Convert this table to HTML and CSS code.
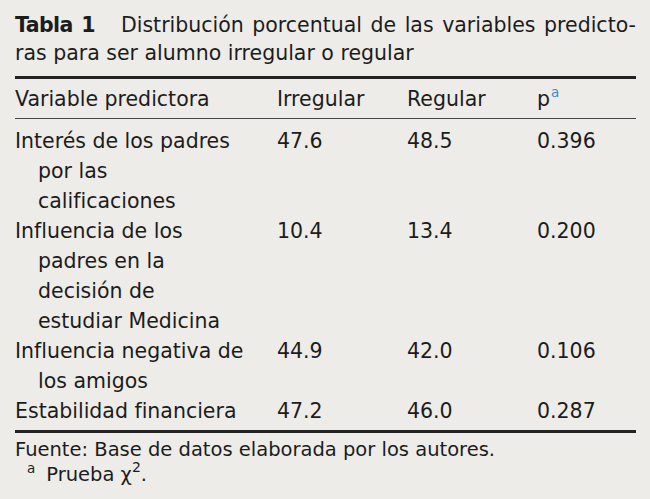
FILE: index.html
```html
<!DOCTYPE html>
<html lang="es">
<head>
<meta charset="utf-8">
<link rel="stylesheet" href="styles.css">
</head>
<body>
<div class="wrap">
  <div class="caption">
    <div class="cap-line1"><span class="cap-label">Tabla 1</span>Distribución porcentual de las variables predicto-</div>
    <div class="cap-line2">ras para ser alumno irregular o regular</div>
  </div>
  <table class="data">
    <thead>
      <tr>
        <th class="c1">Variable predictora</th>
        <th class="c2">Irregular</th>
        <th class="c3">Regular</th>
        <th class="c4">p<sup class="note">a</sup></th>
      </tr>
    </thead>
    <tbody>
      <tr>
        <td class="c1"><div class="hang">Interés de los padres<br>por las<br>calificaciones</div></td>
        <td>47.6</td><td>48.5</td><td>0.396</td>
      </tr>
      <tr>
        <td class="c1"><div class="hang">Influencia de los<br>padres en la<br>decisión de<br>estudiar Medicina</div></td>
        <td>10.4</td><td>13.4</td><td>0.200</td>
      </tr>
      <tr>
        <td class="c1"><div class="hang">Influencia negativa de<br>los amigos</div></td>
        <td>44.9</td><td>42.0</td><td>0.106</td>
      </tr>
      <tr class="last">
        <td class="c1"><div class="hang">Estabilidad financiera</div></td>
        <td>47.2</td><td>46.0</td><td>0.287</td>
      </tr>
    </tbody>
  </table>
  <div class="foot">
    <div>Fuente: Base de datos elaborada por los autores.</div>
    <div class="fn"><sup class="fn-mark">a</sup>Prueba χ<sup class="sq">2</sup>.</div>
  </div>
</div>
</body>
</html>
```
FILE: styles.css
```css
html, body {
  margin: 0;
  padding: 0;
  background: #eeece8;
}
body {
  font-family: "DejaVu Sans", Verdana, sans-serif;
  color: #1c1c1c;
}
.wrap {
  padding: 11px 14px 0 15px;
}
.caption {
  font-size: 20.5px;
  line-height: 28px;
}
.cap-line1 {
  text-align: justify;
  text-align-last: justify;
}
.cap-label {
  font-weight: bold;
  letter-spacing: -0.6px;
  margin-right: 26px;
}
.data {
  margin-top: 9px;
  width: 100%;
  border-collapse: collapse;
  font-size: 20.5px;
  line-height: 30px;
  border-top: 3px solid #232323;
  border-bottom: 3px solid #232323;
}
.data th {
  font-weight: normal;
  text-align: left;
  padding: 5px 0 4px 0;
  border-bottom: 1px solid #444;
  vertical-align: top;
  white-space: nowrap;
}
.data td {
  padding: 0;
  vertical-align: top;
  white-space: nowrap;
}
.data tbody tr:first-child td {
  padding-top: 7px;
}
.data tr.last td {
  padding-bottom: 4px;
}
.c1 { width: 262px; }
.c2 { width: 130px; }
.c3 { width: 130px; }
.hang {
  padding-left: 23px;
  text-indent: -23px;
}
.note {
  color: #3a8bcb;
  font-size: 13.5px;
  vertical-align: 9px;
  line-height: 0;
  margin-left: 1px;
}
.foot {
  font-size: 19.5px;
  line-height: 25px;
  padding-top: 4px;
}
.fn {
  padding-left: 12px;
}
.fn-mark {
  font-size: 13.5px;
  vertical-align: 8px;
  line-height: 0;
  margin-right: 11px;
}
.sq {
  font-size: 14px;
  vertical-align: 9px;
  line-height: 0;
}
```
